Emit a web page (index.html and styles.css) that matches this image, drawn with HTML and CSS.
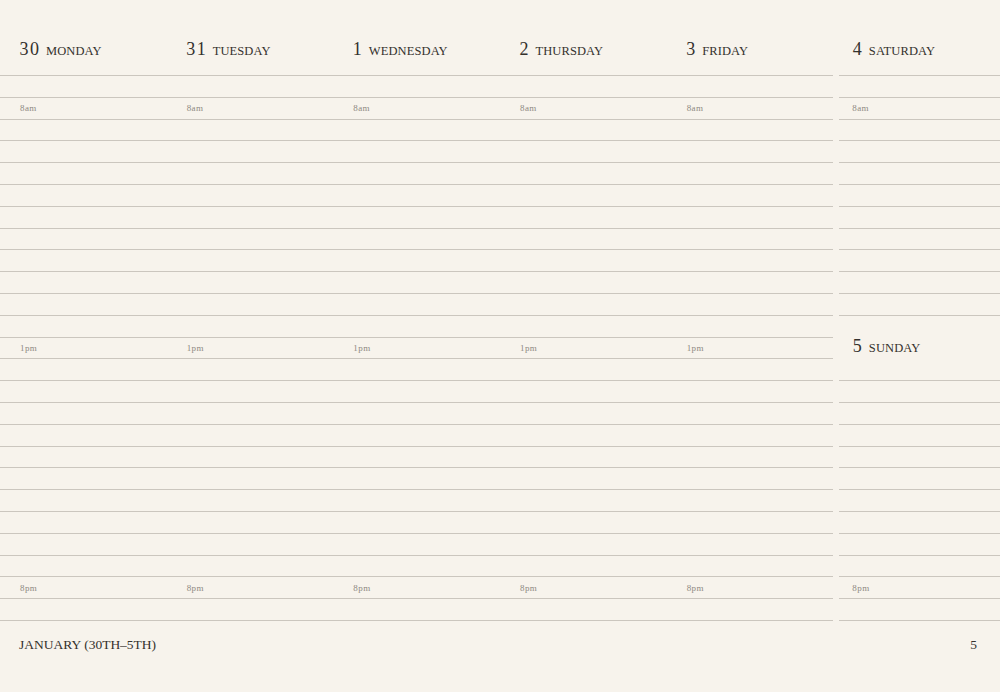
FILE: index.html
```html
<!DOCTYPE html>
<html lang="en">
<head>
<meta charset="utf-8">
<title>January (30th–5th)</title>
<link rel="stylesheet" href="styles.css">
</head>
<body>
<div class="page">
  <div class="week">
    <section class="weekdays">
      <div class="heads">
        <h2 class="day"><span class="num">30</span><span class="name">Monday</span></h2>
        <h2 class="day"><span class="num">31</span><span class="name">Tuesday</span></h2>
        <h2 class="day"><span class="num">1</span><span class="name">Wednesday</span></h2>
        <h2 class="day"><span class="num">2</span><span class="name">Thursday</span></h2>
        <h2 class="day"><span class="num">3</span><span class="name">Friday</span></h2>
      </div>
      <div class="rules">
        <div class="row"></div>
        <div class="row times"><span>8am</span><span>8am</span><span>8am</span><span>8am</span><span>8am</span></div>
        <div class="row"></div>
        <div class="row"></div>
        <div class="row"></div>
        <div class="row"></div>
        <div class="row"></div>
        <div class="row"></div>
        <div class="row"></div>
        <div class="row"></div>
        <div class="row"></div>
        <div class="row"></div>
        <div class="row times"><span>1pm</span><span>1pm</span><span>1pm</span><span>1pm</span><span>1pm</span></div>
        <div class="row"></div>
        <div class="row"></div>
        <div class="row"></div>
        <div class="row"></div>
        <div class="row"></div>
        <div class="row"></div>
        <div class="row"></div>
        <div class="row"></div>
        <div class="row"></div>
        <div class="row"></div>
        <div class="row times"><span>8pm</span><span>8pm</span><span>8pm</span><span>8pm</span><span>8pm</span></div>
        <div class="row"></div>
      </div>
    </section>
    <section class="weekend">
      <h2 class="day weekend-head"><span class="num">4</span><span class="name">Saturday</span></h2>
      <div class="rules">
        <div class="row"></div>
        <div class="row times single"><span>8am</span></div>
        <div class="row"></div>
        <div class="row"></div>
        <div class="row"></div>
        <div class="row"></div>
        <div class="row"></div>
        <div class="row"></div>
        <div class="row"></div>
        <div class="row"></div>
        <div class="row"></div>
        <div class="sunday">
          <h2 class="day"><span class="num">5</span><span class="name">Sunday</span></h2>
        </div>
        <div class="row"></div>
        <div class="row"></div>
        <div class="row"></div>
        <div class="row"></div>
        <div class="row"></div>
        <div class="row"></div>
        <div class="row"></div>
        <div class="row"></div>
        <div class="row"></div>
        <div class="row times single"><span>8pm</span></div>
        <div class="row"></div>
      </div>
    </section>
  </div>
  <footer class="foot">
    <span class="month">January (30th–5th)</span>
    <span class="page-no">5</span>
  </footer>
</div>
</body>
</html>
```

FILE: styles.css
```css
* {
  box-sizing: border-box;
}

html,
body {
  margin: 0;
  padding: 0;
  background: #f7f3ec;
}

.page {
  width: 1000px;
  height: 692px;
  background: #f7f3ec;
  color: #34312d;
  font-family: "Liberation Serif", "DejaVu Serif", serif;
  overflow: hidden;
}

.week {
  display: grid;
  grid-template-columns: 5fr 1fr;
}

.heads {
  display: grid;
  grid-template-columns: repeat(5, 1fr);
  height: 75px;
}

.day {
  margin: 0;
  display: flex;
  align-items: baseline;
  gap: 5.5px;
  font-weight: normal;
  line-height: 18px;
}

.heads .day {
  padding: 40px 0 0 19.5px;
}

.num {
  font-size: 18px;
  letter-spacing: 1.5px;
}

.name {
  font-size: 12.5px;
  text-transform: uppercase;
  letter-spacing: 0.1px;
}

.rules {
  border-bottom: 1px solid #cbc6be;
}

.row {
  height: 21.8px;
  border-top: 1px solid #cbc6be;
}

.times {
  display: grid;
  grid-template-columns: repeat(5, 1fr);
  align-items: center;
  font-size: 9px;
  color: #8e8982;
  letter-spacing: 0.4px;
}

.times span {
  padding-left: 20px;
}

.times.single {
  grid-template-columns: 1fr;
}

.times.single span {
  padding-left: 13px;
}

.weekend {
  padding-left: 6px;
}

.weekend-head {
  height: 75px;
  padding: 40px 0 0 13.5px;
}

.sunday {
  height: 65.4px;
  border-top: 1px solid #cbc6be;
  padding: 21px 0 0 13.5px;
}

.foot {
  display: flex;
  justify-content: space-between;
  align-items: baseline;
  padding: 16px 23px 0 19px;
  font-size: 13.5px;
  line-height: 16px;
  text-transform: uppercase;
  color: #34312d;
}
```
